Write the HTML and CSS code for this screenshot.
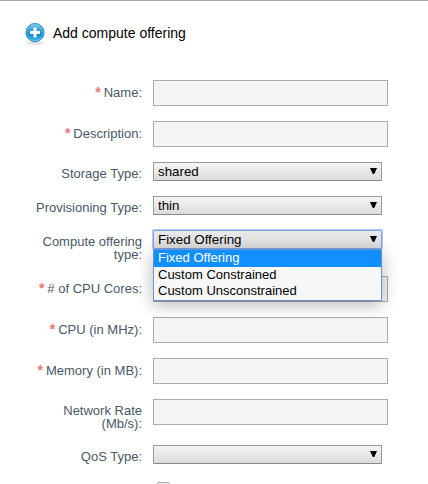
FILE: index.html
```html
<!DOCTYPE html>
<html lang="en">
<head>
<meta charset="utf-8">
<title>Add compute offering</title>
<link rel="stylesheet" href="styles.css">
</head>
<body>
<main class="dialog">
  <header class="title">
    <svg class="add-icon" width="22" height="24" viewBox="0 0 22 24" aria-hidden="true">
      <defs>
        <linearGradient id="disc" x1="0" y1="0" x2="0" y2="1">
          <stop offset="0" stop-color="#8ccbea"/>
          <stop offset=".4" stop-color="#359bd0"/>
          <stop offset=".6" stop-color="#1489c8"/>
          <stop offset="1" stop-color="#35c5ee"/>
        </linearGradient>
      </defs>
      <ellipse cx="10" cy="20.3" rx="9" ry="1.4" fill="#dedede"/>
      <circle cx="10" cy="9.6" r="9.1" fill="url(#disc)" stroke="#2b86c8" stroke-width="1"/>
      <circle cx="10" cy="9.6" r="8.1" fill="none" stroke="#7cc9ef" stroke-width=".6"/>
      <path d="M10 4.5v10M5 9.5h10" stroke="#fff" stroke-width="3"/>
    </svg>
    <h1>Add compute offering</h1>
  </header>
  <form class="fields">
    <div class="row"><label><span class="req">*</span>Name:</label><div class="input"></div></div>
    <div class="row"><label><span class="req">*</span>Description:</label><div class="input"></div></div>
    <div class="row select-row"><label>Storage Type:</label><div class="select">shared<i class="arrow"></i></div></div>
    <div class="row select-row"><label>Provisioning Type:</label><div class="select">thin<i class="arrow"></i></div></div>
    <div class="row select-row tall"><label>Compute offering type:</label>
      <div class="select open">Fixed Offering<i class="arrow"></i>
        <ul class="menu">
          <li class="selected">Fixed Offering</li>
          <li>Custom Constrained</li>
          <li>Custom Unsconstrained</li>
        </ul>
      </div>
    </div>
    <div class="row"><label><span class="req">*</span># of CPU Cores:</label><div class="input"></div></div>
    <div class="row"><label><span class="req">*</span>CPU (in MHz):</label><div class="input"></div></div>
    <div class="row"><label><span class="req">*</span>Memory (in MB):</label><div class="input"></div></div>
    <div class="row tall"><label>Network Rate (Mb/s):</label><div class="input"></div></div>
    <div class="row select-row"><label>QoS Type:</label><div class="select"><i class="arrow"></i></div></div>
    <div class="row"><label></label><div class="checkbox"></div></div>
  </form>
</main>
</body>
</html>
```
FILE: styles.css
```css
* { box-sizing: border-box; }
body {
  margin: 0;
  height: 484px;
  overflow: hidden;
  background: #fff;
  font-family: "Liberation Sans", Arial, sans-serif;
}
.dialog {
  height: 484px;
  overflow: hidden;
  border-top: 1px solid #a8a8a8;
}
.title {
  display: flex;
  height: 79px;
  padding: 22px 0 0 25px;
}
.title h1 {
  margin: 2px 0 0 6px;
  font-size: 14px;
  font-weight: 400;
  line-height: 16px;
  color: #000;
}
.row {
  display: flex;
  align-items: flex-start;
  gap: 11px;
  height: 41px;
}
.select-row { height: 34px; }
.tall { height: 46px; }
label {
  width: 142px;
  padding: 6px 0 0 30px;
  font-size: 13px;
  line-height: 13px;
  text-align: right;
  color: #485867;
}
.select-row label,
.tall label { padding-top: 5px; }
.req {
  margin-right: 3px;
  font-size: 14px;
  font-weight: 700;
  line-height: 10px;
  color: #f27474;
}
.input {
  width: 235px;
  height: 26px;
  border: 1px solid #ababab;
  background: #f5f5f5;
}
.select {
  position: relative;
  display: flex;
  justify-content: space-between;
  width: 229px;
  height: 19px;
  padding: 1px 4px 0;
  border: 1px solid #999;
  border-bottom-color: #888;
  border-radius: 1px;
  background: linear-gradient(#f5f5f5, #dcdcdc);
  font-size: 13.33px;
  line-height: 15px;
  color: #000;
}
.arrow {
  width: 7px;
  height: 6px;
  margin: 4px 0 0 auto;
  background: #000;
  clip-path: polygon(0 0, 100% 0, 60% 100%, 40% 100%);
}
.open {
  border-color: #7ba2e4;
  background: linear-gradient(#e9e9e9, #dedede);
  box-shadow: 0 0 0 1px #b3caf5;
}
.menu {
  position: absolute;
  z-index: 1;
  top: 18px;
  left: -1px;
  width: 229px;
  margin: 0;
  padding: 0 0 1px;
  list-style: none;
  border: 1px solid #6c93d1;
  background: #f7f7f7;
  box-shadow: 0 4px 16px rgba(0, 0, 0, .28);
  font-size: 13px;
}
.menu li {
  height: 16px;
  padding-left: 4px;
  line-height: 16px;
}
.menu .selected {
  height: 17px;
  background: #118fff;
  color: #fff;
}
.checkbox {
  width: 13px;
  height: 13px;
  margin: 3px 0 0 4px;
  border: 1px solid #aaa;
  border-radius: 2px;
  background: #eee;
}
```
